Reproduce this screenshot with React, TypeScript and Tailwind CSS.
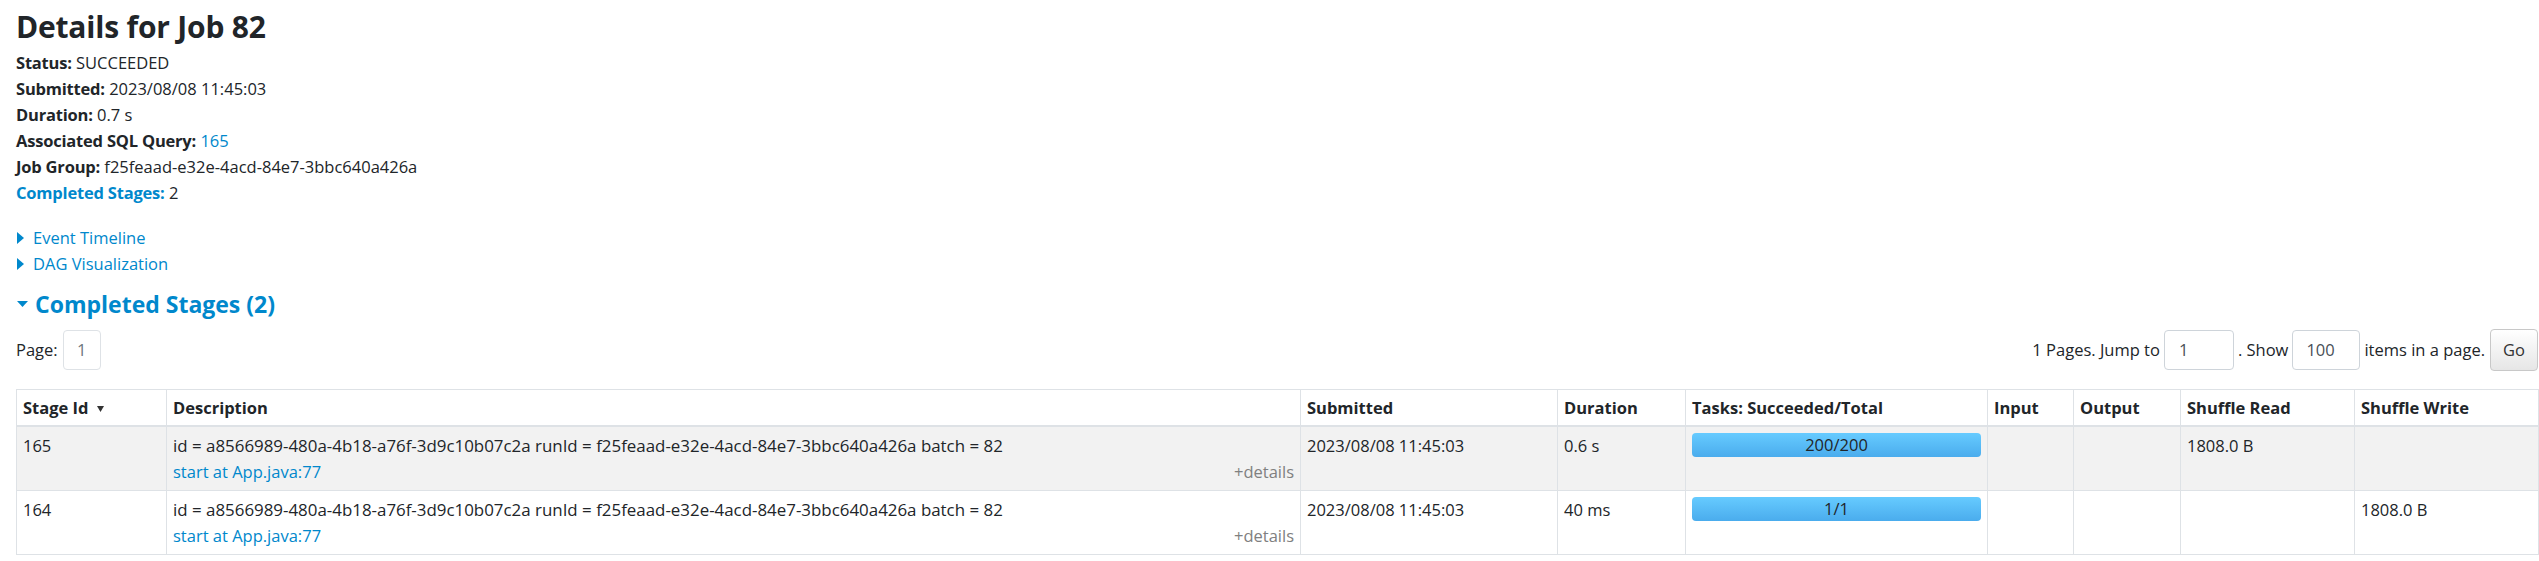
import React from "react";

const LINK = "text-[#0088cc]";

function TriRight() {
  return (
    <svg width="7" height="12" viewBox="0 0 7 12" className="mr-[9px] ml-[1px] shrink-0">
      <polygon points="0,0 7,6 0,12" fill="#0088cc" />
    </svg>
  );
}

function TriDown() {
  return (
    <svg width="11" height="6" viewBox="0 0 11 6" className="mr-[7px] ml-[1px] shrink-0">
      <polygon points="0,0 11,0 5.5,6" fill="#0088cc" />
    </svg>
  );
}

function SortDown() {
  return (
    <svg width="7" height="6" viewBox="0 0 7 6" className="ml-[9px] inline-block align-middle">
      <polygon points="0,0 7,0 3.5,6" fill="#333" />
    </svg>
  );
}

type Row = {
  id: string;
  submitted: string;
  duration: string;
  tasks: string;
  shuffleRead: string;
  shuffleWrite: string;
};

const rows: Row[] = [
  { id: "165", submitted: "2023/08/08 11:45:03", duration: "0.6 s", tasks: "200/200", shuffleRead: "1808.0 B", shuffleWrite: "" },
  { id: "164", submitted: "2023/08/08 11:45:03", duration: "40 ms", tasks: "1/1", shuffleRead: "", shuffleWrite: "1808.0 B" },
];

const desc =
  "id = a8566989-480a-4b18-a76f-3d9c10b07c2a runId = f25feaad-e32e-4acd-84e7-3bbc640a426a batch = 82";

const LABEL = "font-bold tracking-[-0.2px]";

export default function App() {
  return (
    <div className="min-h-[561px] bg-white pl-4 pr-[1px] font-['Open_Sans',sans-serif] text-[16.5px] leading-[26px] text-[#212529]">
      <h3 className="pt-[7px] text-[30px] font-bold leading-[40px] tracking-[-0.2px]">Details for Job 82</h3>
      <ul className="mt-[3px]">
        <li>
          <strong className={LABEL}>Status:</strong> SUCCEEDED
        </li>
        <li>
          <strong className={LABEL}>Submitted:</strong> 2023/08/08 11:45:03
        </li>
        <li>
          <strong className={LABEL}>Duration:</strong> 0.7 s
        </li>
        <li>
          <strong className={LABEL}>Associated SQL Query:</strong> <a className={LINK}>165</a>
        </li>
        <li>
          <strong className={LABEL}>Job Group:</strong> f25feaad-e32e-4acd-84e7-3bbc640a426a
        </li>
        <li>
          <a className={`${LINK} ${LABEL}`}>Completed Stages:</a> 2
        </li>
      </ul>

      <div className="mt-[19px]">
        <div className="flex items-center">
          <TriRight />
          <a className={LINK}>Event Timeline</a>
        </div>
        <div className="flex items-center">
          <TriRight />
          <a className={LINK}>DAG Visualization</a>
        </div>
      </div>

      <h4 className={`mt-[12px] flex items-center text-[23px] font-bold leading-[30px] ${LINK}`}>
        <TriDown />
        Completed Stages (2)
      </h4>

      <div className="mt-[11px] flex h-[40px] items-center justify-between">
        <div className="flex items-center">
          <span>Page:</span>
          <span className="ml-[5px] flex h-[40px] w-[38px] items-center justify-center rounded-[4px] border border-[#dee2e6] text-[#6c757d]">
            1
          </span>
        </div>
        <div className="flex items-center">
          <span>1 Pages. Jump to</span>
          <span className="mx-[4px] flex h-[40px] w-[70px] items-center rounded-[4px] border border-[#ced4da] pl-[14px] text-[#495057]">
            1
          </span>
          <span>. Show</span>
          <span className="mx-[4px] flex h-[40px] w-[68px] items-center rounded-[4px] border border-[#ced4da] pl-[13px] text-[#495057]">
            100
          </span>
          <span>items in a page.</span>
          <button className="ml-[5px] flex h-[42px] w-[48px] items-center justify-center rounded-[4px] border border-[#c8c8c8] bg-linear-to-b from-white to-[#e6e6e6] text-[#333]">
            Go
          </button>
        </div>
      </div>

      <table className="mt-[19px] w-full table-fixed border-collapse">
        <colgroup>
          <col className="w-[150px]" />
          <col className="w-[1134px]" />
          <col className="w-[257px]" />
          <col className="w-[128px]" />
          <col className="w-[302px]" />
          <col className="w-[86px]" />
          <col className="w-[107px]" />
          <col className="w-[174px]" />
          <col className="w-[184px]" />
        </colgroup>
        <thead>
          <tr className="text-left font-bold">
            <th className="border border-b-2 border-[#dee2e6] px-[6px] py-[4.5px]">
              Stage Id
              <SortDown />
            </th>
            {["Description", "Submitted", "Duration", "Tasks: Succeeded/Total", "Input", "Output", "Shuffle Read", "Shuffle Write"].map(
              (h) => (
                <th key={h} className="border border-b-2 border-[#dee2e6] px-[6px] py-[4.5px]">
                  {h}
                </th>
              )
            )}
          </tr>
        </thead>
        <tbody>
          {rows.map((r, i) => (
            <tr key={r.id} className={i % 2 === 0 ? "bg-[#f2f2f2]" : "bg-white"}>
              <td className="border border-[#dee2e6] px-[6px] py-[5.5px] align-top">{r.id}</td>
              <td className="border border-[#dee2e6] px-[6px] py-[5.5px] align-top">
                <div className="text-[16.9px]">{desc}</div>
                <div className="flex justify-between">
                  <a className={LINK}>start at App.java:77</a>
                  <span className="text-[#808080]">+details</span>
                </div>
              </td>
              <td className="border border-[#dee2e6] px-[6px] py-[5.5px] align-top">{r.submitted}</td>
              <td className="border border-[#dee2e6] px-[6px] py-[5.5px] align-top">{r.duration}</td>
              <td className="border border-[#dee2e6] px-[6px] py-[5.5px] align-top">
                <div className="flex h-[24px] items-center justify-center rounded-[4px] bg-linear-to-b from-[#66cbff] to-[#4aaced] leading-[24px]">
                  {r.tasks}
                </div>
              </td>
              <td className="border border-[#dee2e6] px-[6px] py-[5.5px] align-top"></td>
              <td className="border border-[#dee2e6] px-[6px] py-[5.5px] align-top"></td>
              <td className="border border-[#dee2e6] px-[6px] py-[5.5px] align-top">{r.shuffleRead}</td>
              <td className="border border-[#dee2e6] px-[6px] py-[5.5px] align-top">{r.shuffleWrite}</td>
            </tr>
          ))}
        </tbody>
      </table>
    </div>
  );
}
